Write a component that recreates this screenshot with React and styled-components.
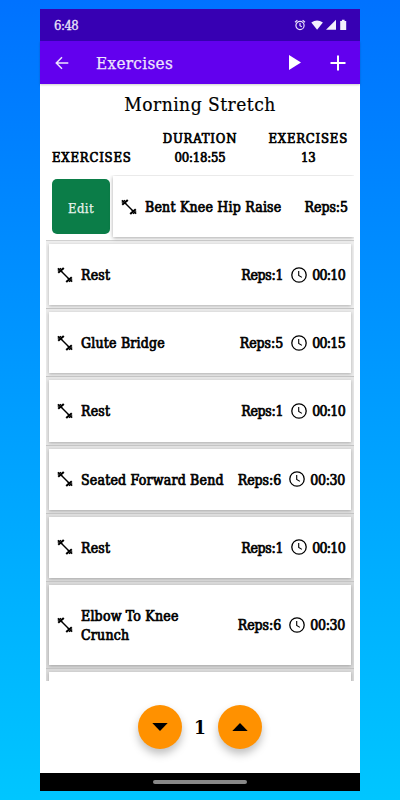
import React from 'react'
import styled, { createGlobalStyle } from 'styled-components'

const EXERCISES = [
   { id: 1, name: 'Rest', reps: 1, time: '00:10' },
   { id: 2, name: 'Glute Bridge', reps: 5, time: '00:15' },
   { id: 3, name: 'Rest', reps: 1, time: '00:10' },
   { id: 4, name: 'Seated Forward Bend', reps: 6, time: '00:30' },
   { id: 5, name: 'Rest', reps: 1, time: '00:10' },
   { id: 6, name: 'Elbow To Knee Crunch', reps: 6, time: '00:30', tall: true },
]

const ROW_SHADES = ['#eeeeee', '#eaeaea', '#e6e6e6', '#e2e2e2', '#dedede', '#d9d9d9']

function Dumbbell() {
   return (
      <DumbbellSvg viewBox="0 0 16 16">
         <path d="M4 4l8 8" strokeWidth="1.4" />
         <path d="M1.2 5.8L6.8 1M9.2 15L14.8 10.2" strokeWidth="2.1" />
         <path d="M.8 3.6L4 1.2M12 14.8L15.2 12.4" strokeWidth="1.2" />
         <path d="M.8 1.4L5.2 4.8M10.8 11.2L15.2 14.6" strokeWidth="1.4" />
      </DumbbellSvg>
   )
}

function Clock() {
   return (
      <ClockSvg viewBox="0 0 16 16">
         <circle cx="8" cy="8" r="7.2" strokeWidth="1.3" />
         <path d="M7.7 4v4.4l3.2 2" strokeWidth="1.1" />
      </ClockSvg>
   )
}

function ExerciseRow({ name, reps, time, tall, shade }) {
   return (
      <Row $shade={shade}>
         <Card $tall={tall}>
            <Dumbbell />
            <Name>{name}</Name>
            <Reps $tight={reps === 1}>Reps:{reps}</Reps>
            <Clock />
            <Time $tight={time.includes('1')}>{time}</Time>
         </Card>
      </Row>
   )
}

function App() {
   return (
      <Backdrop>
         <GlobalStyle />
         <Phone>
            <StatusBar>
               <span>6:48</span>
               <StatusIcons viewBox="0 0 54 14">
                  <g fill="none" stroke="#e9e1fb" strokeWidth="1.2">
                     <circle cx="6" cy="7.5" r="4.1" />
                     <path d="M6 5v2.7l1.8 1.1M1 4.2l2.4-2M11 4.2L8.6 2.2" />
                  </g>
                  <path d="M17.3 4.5Q23 .3 28.9 4.5L23.1 11.8z" />
                  <path d="M42 1.8v10H32z" />
                  <path d="M46.2 3h1.7V1.8h2.7V3h1.6v9h-6z" />
               </StatusIcons>
            </StatusBar>
            <AppBar>
               <BackIcon viewBox="0 0 14 14">
                  <path d="M13.3 7H1.5M7 1.3L1.3 7 7 12.7" />
               </BackIcon>
               <AppTitle>Exercises</AppTitle>
               <PlayIcon viewBox="0 0 12 15">
                  <path d="M0 0l12 7.5L0 15z" />
               </PlayIcon>
               <PlusIcon viewBox="0 0 16 16">
                  <path d="M8 .5v15M.5 8h15" />
               </PlusIcon>
            </AppBar>
            <Heading>Morning Stretch</Heading>
            <Summary>
               <Stat>EXERCISES</Stat>
               <Stat>
                  DURATION
                  <Value>00:18:55</Value>
               </Stat>
               <Stat>
                  EXERCISES
                  <Value>13</Value>
               </Stat>
            </Summary>
            <List>
               <SwipedRow>
                  <EditButton>Edit</EditButton>
                  <SwipedCard>
                     <Dumbbell />
                     <Name>Bent Knee Hip Raise</Name>
                     <Reps>Reps:5</Reps>
                  </SwipedCard>
               </SwipedRow>
               {EXERCISES.map((item, i) => (
                  <ExerciseRow key={item.id} {...item} shade={ROW_SHADES[i]} />
               ))}
               <Row $shade="#dadada">
                  <Card />
               </Row>
            </List>
            <Counter>
               <RoundButton>
                  <svg width="16" height="8" viewBox="0 0 16 8">
                     <path d="M.3 0h15.4L8 8z" />
                  </svg>
               </RoundButton>
               <Count>1</Count>
               <RoundButton>
                  <svg width="16" height="8" viewBox="0 0 16 8">
                     <path d="M.3 8h15.4L8 0z" />
                  </svg>
               </RoundButton>
            </Counter>
            <NavBar>
               <Handle />
            </NavBar>
         </Phone>
      </Backdrop>
   )
}

export default App

const GlobalStyle = createGlobalStyle`
   * {
      box-sizing: border-box;
   }
   body {
      margin: 0;
      font-family: 'Roboto Slab', 'DejaVu Serif Condensed', 'DejaVu Serif', serif;
      font-stretch: condensed;
      color: #000;
   }
`

const Backdrop = styled.div`
   height: 800px;
   padding: 9px 40px;
   background: linear-gradient(#0072ff, #00c6ff);
`

const Phone = styled.div`
   display: flex;
   flex-direction: column;
   height: 782px;
   background: #fff;
`

const StatusBar = styled.div`
   display: flex;
   align-items: center;
   justify-content: space-between;
   flex: none;
   height: 32px;
   padding: 0 12px 0 14px;
   background: #3700b3;
   color: #ece6fa;
   font-size: 13px;
   letter-spacing: -0.5px;
   -webkit-text-stroke: 0.3px #ece6fa;
`

const StatusIcons = styled.svg`
   width: 54px;
   height: 14px;
   fill: #f3effd;
`

const AppBar = styled.div`
   display: flex;
   align-items: center;
   flex: none;
   height: 43px;
   padding: 0 14px 0 15px;
   background: #6200ee;
   color: #eee5fd;
   box-shadow: 0 1px 2px rgba(0, 0, 0, 0.2);
`

const BackIcon = styled.svg`
   width: 14px;
   height: 14px;
   fill: none;
   stroke: #eee5fd;
   stroke-width: 1.5;
`

const AppTitle = styled.h1`
   flex: 1;
   margin: 0 0 0 27px;
   font-size: 17px;
   font-weight: 400;
   letter-spacing: 0.3px;
   -webkit-text-stroke: 0.25px #eee5fd;
`

const PlayIcon = styled.svg`
   width: 12px;
   height: 15px;
   margin-right: 29px;
   fill: #fff;
`

const PlusIcon = styled.svg`
   width: 16px;
   height: 16px;
   stroke: #fff;
   stroke-width: 2;
`

const Heading = styled.h2`
   flex: none;
   margin: 0;
   height: 40px;
   line-height: 40px;
   text-align: center;
   font-size: 19px;
   font-weight: 400;
   letter-spacing: 0.5px;
   -webkit-text-stroke: 0.2px #000;
`

const Summary = styled.div`
   display: flex;
   align-items: flex-end;
   justify-content: space-between;
   flex: none;
   height: 43px;
   padding: 0 12px;
   font-size: 13px;
   line-height: 19px;
   letter-spacing: 0.8px;
   -webkit-text-stroke: 0.7px #000;
`

const Stat = styled.div`
   text-align: center;
`

const Value = styled.div`
   letter-spacing: -0.2px;
`

const List = styled.div`
   flex: none;
   height: 506px;
   margin: 8px 6px 0;
   overflow: hidden;
`

const Row = styled.div`
   padding: 3px 3px;
   border-bottom: 1px solid #c4c4c4;
   background: ${({ $shade }) => $shade};
   overflow: hidden;
`

const Card = styled.div`
   display: flex;
   align-items: center;
   height: ${({ $tall }) => ($tall ? '80px' : '61.2px')};
   padding: 0 6px 0 8px;
   background: #fff;
   box-shadow: 0 1px 3px rgba(0, 0, 0, 0.25);
   font-size: 14px;
   line-height: 19px;
   -webkit-text-stroke: 0.7px #000;
`

const SwipedRow = styled.div`
   display: flex;
   height: 66px;
   padding-left: 6px;
   border-bottom: 1px solid #d0d0d0;
`

const EditButton = styled.button`
   flex: none;
   width: 58px;
   height: 55px;
   margin: 4px 3px 0 0;
   padding: 3px 0 0;
   border: 0;
   border-radius: 5px;
   background: #0b7d48;
   color: #e7f3ec;
   font: inherit;
   font-size: 13px;
   letter-spacing: 0.4px;
   -webkit-text-stroke: 0.25px #e7f3ec;
`

const SwipedCard = styled(Card)`
   flex: 1;
   margin-top: 1px;
   box-shadow: 0 1px 4px rgba(0, 0, 0, 0.35);
`

const DumbbellSvg = styled.svg`
   flex: none;
   width: 16px;
   height: 16px;
   margin-right: 8px;
   fill: none;
   stroke: #000;
`

const ClockSvg = styled.svg`
   flex: none;
   width: 16px;
   height: 16px;
   margin: 0 5px 0 8px;
   fill: none;
   stroke: #000;
`

const Name = styled.div`
   flex: 1;
   min-width: 0;
   padding: 2px 10px 0 0;
   letter-spacing: 0.2px;
`

const Reps = styled.div`
   flex: none;
   padding-top: 2px;
   letter-spacing: ${({ $tight }) => ($tight ? '-0.3px' : '-0.05px')};
`

const Time = styled.div`
   flex: none;
   padding-top: 2px;
   letter-spacing: ${({ $tight }) => ($tight ? '-0.7px' : '-0.3px')};
`

const Counter = styled.div`
   display: flex;
   align-items: center;
   justify-content: center;
   flex: 1;
`

const RoundButton = styled.button`
   display: flex;
   align-items: center;
   justify-content: center;
   width: 44px;
   height: 44px;
   padding: 0;
   border: 0;
   border-radius: 50%;
   background: #ff9100;
   box-shadow: 0 5px 8px rgba(0, 0, 0, 0.25);
`

const Count = styled.div`
   width: 36px;
   text-align: center;
   font-size: 19px;
   font-weight: 700;
`

const NavBar = styled.div`
   display: flex;
   align-items: center;
   justify-content: center;
   flex: none;
   height: 18px;
   background: #000;
`

const Handle = styled.div`
   width: 94px;
   height: 4px;
   border-radius: 2px;
   background: #888;
`
